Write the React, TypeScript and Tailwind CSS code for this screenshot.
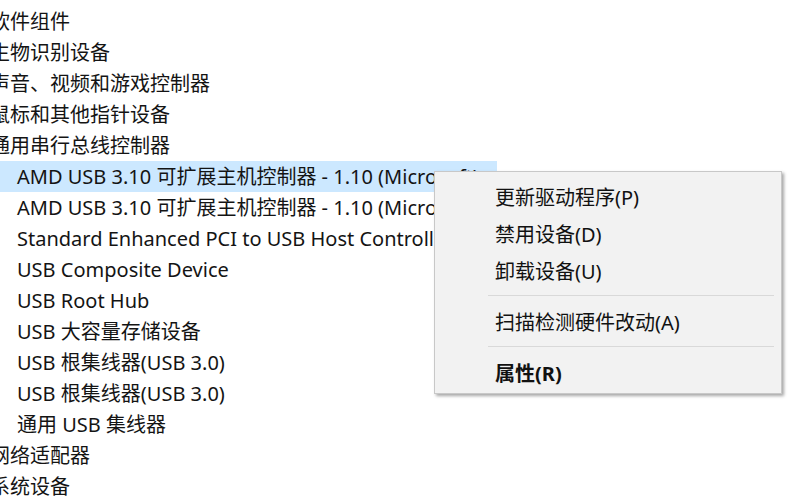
import React from "react";

const rows: { text: string; child?: boolean; selected?: boolean }[] = [
  { text: "软件组件" },
  { text: "生物识别设备" },
  { text: "声音、视频和游戏控制器" },
  { text: "鼠标和其他指针设备" },
  { text: "通用串行总线控制器" },
  { text: "AMD USB 3.10 可扩展主机控制器 - 1.10 (Microsoft)", child: true, selected: true },
  { text: "AMD USB 3.10 可扩展主机控制器 - 1.10 (Microsoft)", child: true },
  { text: "Standard Enhanced PCI to USB Host Controller", child: true },
  { text: "USB Composite Device", child: true },
  { text: "USB Root Hub", child: true },
  { text: "USB 大容量存储设备", child: true },
  { text: "USB 根集线器(USB 3.0)", child: true },
  { text: "USB 根集线器(USB 3.0)", child: true },
  { text: "通用 USB 集线器", child: true },
  { text: "网络适配器" },
  { text: "系统设备" },
];

function MenuItem({ label, bold }: { label: string; bold?: boolean }) {
  return (
    <div className={`flex h-[37px] items-center pl-[60px] ${bold ? "font-bold" : ""}`}>{label}</div>
  );
}

function Separator() {
  return (
    <div className="h-[14px] pt-[5px] pl-[53px] pr-[7px]">
      <div className="h-px bg-[#d9d9d9]" />
    </div>
  );
}

export default function App() {
  return (
    <div
      className="relative h-[500px] w-[800px] overflow-hidden bg-white text-[20px] text-[#141414]"
      style={{ fontFamily: '"Noto Sans", "Noto Sans CJK SC", sans-serif' }}
    >
      <div className="pt-[6px]">
        {rows.map((r, i) => (
          <div key={i} className="flex h-[31px] items-center">
            <div
              className={`flex h-full items-center whitespace-nowrap ${
                r.child ? "pl-[17px]" : "ml-[-10px]"
              } ${r.selected ? "w-[497px] bg-[#cce8ff]" : ""}`}
            >
              {r.text}
            </div>
          </div>
        ))}
      </div>

      <div className="absolute left-[434px] top-[171px] h-[223px] w-[348px] border border-[#c8c8c8] bg-[#f2f2f2] pt-[7px] text-[#111] shadow-[2px_2px_3px_rgba(0,0,0,0.35)]">
        <MenuItem label="更新驱动程序(P)" />
        <MenuItem label="禁用设备(D)" />
        <MenuItem label="卸载设备(U)" />
        <Separator />
        <MenuItem label="扫描检测硬件改动(A)" />
        <Separator />
        <MenuItem label="属性(R)" bold />
      </div>
    </div>
  );
}
